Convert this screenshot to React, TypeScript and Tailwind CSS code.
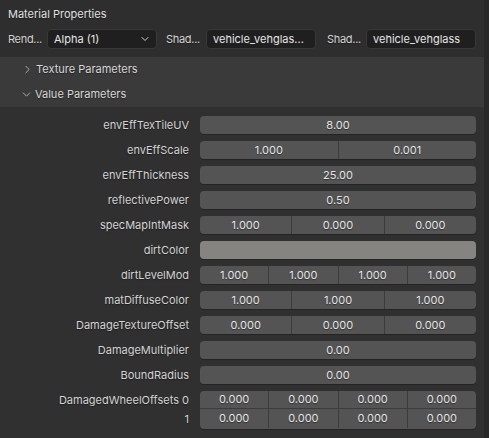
import { ChevronDown, ChevronRight } from 'lucide-react';

type Row = {
    label: string;
    values?: string[];
    color?: string;
};

const rows: Row[] = [
    { label: 'envEffTexTileUV', values: ['8.00'] },
    { label: 'envEffScale', values: ['1.000', '0.001'] },
    { label: 'envEffThickness', values: ['25.00'] },
    { label: 'reflectivePower', values: ['0.50'] },
    { label: 'specMapIntMask', values: ['1.000', '0.000', '0.000'] },
    { label: 'dirtColor', color: '#858480' },
    { label: 'dirtLevelMod', values: ['1.000', '1.000', '1.000', '1.000'] },
    { label: 'matDiffuseColor', values: ['1.000', '1.000', '1.000'] },
    { label: 'DamageTextureOffset', values: ['0.000', '0.000', '0.000'] },
    { label: 'DamageMultiplier', values: ['0.00'] },
    { label: 'BoundRadius', values: ['0.00'] },
];

const shadow = '[text-shadow:0_1px_1px_rgba(0,0,0,0.45)]';

function Cells({ values }: { values: string[] }) {
    return (
        <div className="flex h-full">
            {values.map((v, i) => (
                <div
                    key={i}
                    className={`flex-1 flex items-center justify-center text-[#e6e6e6] ${shadow} ${i > 0 ? 'border-l border-[#3c3c3c]' : ''}`}
                >
                    {v}
                </div>
            ))}
        </div>
    );
}

function PropRow({ row }: { row: Row }) {
    return (
        <div className="flex items-center h-[18px]">
            <div className={`w-[189px] text-right text-[#d4d4d4] ${shadow} whitespace-nowrap`}>{row.label}</div>
            <div
                className="ml-[11px] w-[276px] h-full rounded-[4px] bg-[#545454] overflow-hidden shadow-[0_1px_0_rgba(0,0,0,0.25)]"
                style={row.color ? { backgroundColor: row.color } : undefined}
            >
                {row.values && <Cells values={row.values} />}
            </div>
        </div>
    );
}

function Field({ text, dropdown }: { text: string; dropdown?: boolean }) {
    return (
        <div className="w-[110px] shrink-0 h-[20px] rounded-[4px] bg-[#1f1f1f] border border-[#383838] flex items-center pl-[6px] pr-[5px]">
            <span className="flex-1 whitespace-nowrap text-[#e6e6e6]">{text}</span>
            {dropdown && <ChevronDown size={12} strokeWidth={2} className="text-[#cfcfcf] shrink-0" />}
        </div>
    );
}

function SmallLabel({ text }: { text: string }) {
    return (
        <span className={`whitespace-nowrap tracking-[-0.3px] text-[#d4d4d4] ${shadow}`}>{text}</span>
    );
}

export default function App() {
    return (
        <div
            className="w-[489px] h-[438px] bg-[#303030] flex text-[11px] overflow-hidden"
            style={{ fontFamily: 'Inter, "Noto Sans", sans-serif' }}
        >
            <div className="flex-1 flex flex-col">
                {/* Panel header */}
                <div className="bg-[#2e2e2e]">
                    <div className={`h-[28px] flex items-center px-2 text-[#e0e0e0] ${shadow}`}>Material Properties</div>
                    <div className="mt-[1px] mb-[8px] pl-2 flex items-center">
                        <div className="w-[39px] shrink-0"><SmallLabel text="Rend..." /></div>
                        <Field text="Alpha (1)" dropdown />
                        <div className="ml-[9px] w-[40px] shrink-0"><SmallLabel text="Shad..." /></div>
                        <Field text="vehicle_vehglas..." />
                        <div className="ml-[11px] w-[39px] shrink-0"><SmallLabel text="Shad..." /></div>
                        <Field text="vehicle_vehglass" />
                    </div>
                </div>

                {/* Sub-panel headers */}
                <div className="bg-[#3a3a3a] text-[#d8d8d8]">
                    <div className={`h-[25px] flex items-center pl-[21px] gap-[2px] ${shadow}`}>
                        <ChevronRight size={13} strokeWidth={1.6} className="text-[#bdbdbd]" />
                        <span>Texture Parameters</span>
                    </div>
                    <div className={`h-[25px] flex items-center pl-[20px] gap-[2px] ${shadow}`}>
                        <ChevronDown size={13} strokeWidth={1.6} className="text-[#bdbdbd]" />
                        <span>Value Parameters</span>
                    </div>
                </div>

                {/* Body */}
                <div className="flex flex-col gap-[7px] pt-[9px]">
                    {rows.map((r) => (
                        <PropRow key={r.label} row={r} />
                    ))}
                    <div className="flex">
                        <div className={`w-[189px] flex flex-col text-right text-[#d4d4d4] ${shadow}`}>
                            <div className="h-[19px] leading-[19px]">DamagedWheelOffsets 0</div>
                            <div className="h-[19px] leading-[19px]">1</div>
                        </div>
                        <div className="ml-[11px] w-[276px] rounded-[4px] bg-[#545454] overflow-hidden shadow-[0_1px_0_rgba(0,0,0,0.25)]">
                            <div className="h-[18px] border-b border-[#3c3c3c]">
                                <Cells values={['0.000', '0.000', '0.000', '0.000']} />
                            </div>
                            <div className="h-[19px]">
                                <Cells values={['0.000', '0.000', '0.000', '0.000']} />
                            </div>
                        </div>
                    </div>
                </div>
            </div>
            <div className="w-[5px] bg-[#282828]" />
        </div>
    );
}
